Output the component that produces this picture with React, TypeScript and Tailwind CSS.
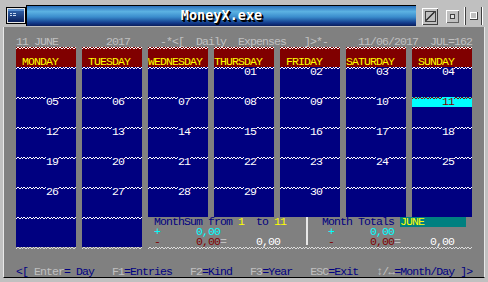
import React from "react";

const mono =
  "font-['Liberation_Mono','DejaVu_Sans_Mono',monospace] text-[11.5px] leading-[10px] tracking-[-0.9px] whitespace-pre";

function Waves({ n, color }: { n: number; color: string }) {
  return (
    <svg width={n * 6} height={10} className="block shrink-0" shapeRendering="crispEdges">
      {Array.from({ length: n }).map((_, i) => (
        <g key={i} fill={color}>
          <rect x={i * 6} y={1} width={1} height={1} />
          <rect x={i * 6 + 1} y={0} width={2} height={1} />
          <rect x={i * 6 + 3} y={1} width={2} height={1} />
          <rect x={i * 6 + 5} y={0} width={1} height={1} />
        </g>
      ))}
    </svg>
  );
}

type ColProps = { name: string; lead: number; dates: string[]; hl?: number; tall?: boolean };

function DayCol({ name, lead, dates, hl, tall }: ColProps) {
  const rows = tall ? 18 : 15;
  return (
    <div className="flex w-[60px] shrink-0 flex-col">
      <div className="h-[10px] bg-[#800000]">
        <Waves n={10} color="#ffffff" />
      </div>
      <div className={`${mono} h-[10px] bg-[#800000] text-[#ffff00]`}>{" ".repeat(lead) + name}</div>
      <div className="flex flex-col bg-[#000080]">
        {Array.from({ length: rows }).map((_, i) => {
          if (i % 3 !== 0) return <div key={i} className="h-[10px]" />;
          const d = dates[i / 3];
          const isHl = hl === i / 3;
          const c = isHl ? "#800000" : "#ffffff";
          return (
            <div key={i} className={`flex h-[10px] ${isHl ? "bg-[#00ffff]" : ""}`}>
              {d ? (
                <>
                  <Waves n={5} color={c} />
                  <span className={`${mono} w-[12px] shrink-0 ${isHl ? "text-[#800000]" : "text-white"}`}>{d}</span>
                  <Waves n={3} color={c} />
                </>
              ) : (
                <Waves n={10} color={c} />
              )}
            </div>
          );
        })}
      </div>
    </div>
  );
}

function Line({ children }: { children: React.ReactNode }) {
  return <div className={`${mono} flex h-[10px]`}>{children}</div>;
}

export default function App() {
  const navy = "text-[#000080]";
  const lg = "text-[#c0c0c0]";
  return (
    <div className="h-[282px] w-[488px] overflow-hidden bg-[#c0c0c0]">
      {/* title zone */}
      <div className="flex h-[27px]">
        <div className="w-[26px] shrink-0 pl-[6px] pt-[7px]">
          <svg width="20" height="17" shapeRendering="crispEdges">
            <defs>
              <linearGradient id="ic" x1="0" y1="0" x2="0" y2="1">
                <stop offset="0" stopColor="#3468b0" />
                <stop offset="1" stopColor="#0a1f5c" />
              </linearGradient>
            </defs>
            <rect x="0" y="0" width="20" height="17" fill="#000000" />
            <rect x="1" y="1" width="18" height="15" fill="#e8e8e8" />
            <rect x="2" y="2" width="16" height="13" fill="url(#ic)" />
            <rect x="2" y="2" width="16" height="2" fill="#5a90d0" />
            <rect x="4" y="6" width="2" height="1" fill="#c8d8f0" />
            <rect x="7" y="6" width="3" height="1" fill="#c8d8f0" />
            <rect x="4" y="8" width="2" height="1" fill="#c8d8f0" />
            <rect x="7" y="8" width="3" height="1" fill="#c8d8f0" />
          </svg>
        </div>
        <div className="mt-[5px] flex h-[21px] w-[390px] shrink-0 items-center justify-center border-l border-t border-black bg-[linear-gradient(to_bottom,#2a70bc_0%,#5cb2e2_28%,#3a8ccc_55%,#123a8a_85%,#0a1e5c_100%)]">
          <span className="font-['DejaVu_Sans_Mono',monospace] text-[13.5px] font-bold leading-none text-white [text-shadow:1px_1px_0_#000,2px_2px_0_#000]">
            MoneyX.exe
          </span>
        </div>
        <div className="flex shrink-0 items-start">
          <div className="ml-[6px] mt-[8px]">
            <svg width="16" height="17" shapeRendering="crispEdges">
              <rect x="0" y="0" width="16" height="17" fill="#ffffff" />
              <rect x="1" y="1" width="15" height="16" fill="#404040" />
              <rect x="1" y="1" width="14" height="15" fill="#c0c0c0" />
              <rect x="3" y="3" width="10" height="10" fill="none" stroke="#404040" strokeWidth="1" />
              <line x1="4" y1="12.5" x2="12.5" y2="4" stroke="#202020" strokeWidth="1.3" shapeRendering="auto" />
            </svg>
          </div>
          <div className="ml-[8px] mt-[10px]">
            <svg width="13" height="13" shapeRendering="crispEdges">
              <rect x="0" y="0" width="13" height="13" fill="#ffffff" />
              <rect x="1" y="1" width="12" height="12" fill="#606060" />
              <rect x="1" y="1" width="11" height="11" fill="#c0c0c0" />
              <rect x="4" y="4" width="5" height="5" fill="#404040" />
              <rect x="5" y="5" width="3" height="3" fill="#e0e0e0" />
            </svg>
          </div>
          <div className="ml-[5px] mt-[7px]">
            <svg width="20" height="18" shapeRendering="crispEdges">
              <rect x="0" y="0" width="1" height="18" fill="#ffffff" />
              <rect x="1" y="0" width="1" height="18" fill="#404040" />
              <rect x="6" y="5" width="8" height="8" fill="#404040" />
              <rect x="6" y="5" width="7" height="7" fill="#ffffff" />
              <rect x="7" y="6" width="5" height="5" fill="#c0c0c0" />
              <rect x="17" y="0" width="1" height="18" fill="#404040" />
              <rect x="18" y="0" width="1" height="18" fill="#ffffff" />
            </svg>
          </div>
        </div>
      </div>

      {/* body */}
      <div className="ml-[3px] w-[482px] border-x border-b border-l-[#e8e8e8] border-r-[#e8e8e8] border-b-black">
        <div className="flex h-[250px] w-[480px] flex-col bg-[#808080]">
          <div className="h-[10px]" />
          <Line>
            <span className={lg}>{"  11 JUNE        2017     -*<[  Daily  Expenses   ]>*-     11/06/2017  JUL=162"}</span>
          </Line>
          <div className="flex gap-[6px] pl-[12px]">
            <DayCol name="MONDAY" lead={1} dates={["", "05", "12", "19", "26", ""]} tall />
            <DayCol name="TUESDAY" lead={1} dates={["", "06", "13", "20", "27", ""]} tall />
            <div className="flex w-[324px] shrink-0 flex-col">
              <div className="flex gap-[6px]">
                <DayCol name="WEDNESDAY" lead={0} dates={["", "07", "14", "21", "28"]} />
                <DayCol name="THURSDAY" lead={0} dates={["01", "08", "15", "22", "29"]} />
                <DayCol name="FRIDAY" lead={1} dates={["02", "09", "16", "23", "30"]} />
                <DayCol name="SATURDAY" lead={0} dates={["03", "10", "17", "24", ""]} />
                <DayCol name="SUNDAY" lead={1} dates={["04", "11", "18", "25", ""]} hl={1} />
              </div>
              <div className="flex h-[30px]">
                <div className="flex w-[156px] shrink-0 flex-col">
                  <Line>
                    <span className={navy}>{" MonthSum from "}</span>
                    <span className="text-[#ffff00]">1</span>
                    <span className={navy}>{"  to "}</span>
                    <span className="text-[#ffff00]">11</span>
                  </Line>
                  <Line>
                    <span className="text-[#00ffff]">{" +      0,00"}</span>
                  </Line>
                  <Line>
                    <span className="text-[#800000]">{" -      0,00"}</span>
                    <span className={lg}>=</span>
                    <span className="text-white">{"     0,00"}</span>
                  </Line>
                </div>
                <div className="flex w-[6px] shrink-0 justify-center pb-[2px]">
                  <div className="w-[2px] bg-[#e8e8e8]" />
                </div>
                <div className="flex w-[162px] shrink-0 flex-col">
                  <Line>
                    <span className={navy}>{"  Month Totals "}</span>
                    <span className="w-[66px] bg-[#008080] text-[#ffff00]">{"JUNE       "}</span>
                  </Line>
                  <Line>
                    <span className="text-[#00ffff]">{"   +      0,00"}</span>
                  </Line>
                  <Line>
                    <span className="text-[#800000]">{"   -      0,00"}</span>
                    <span className={lg}>=</span>
                    <span className="text-white">{"     0,00"}</span>
                  </Line>
                </div>
              </div>
            </div>
          </div>
          <div className="flex h-[10px] gap-[6px] pl-[12px]">
            <Waves n={10} color="#dcdcdc" />
            <Waves n={10} color="#dcdcdc" />
            <Waves n={54} color="#dcdcdc" />
          </div>
          <div className="h-[10px]" />
          <Line>
            <span className={navy}>{"  <[ "}</span>
            <span className={lg}>Enter</span>
            <span className={navy}>{"= Day   "}</span>
            <span className={lg}>F1</span>
            <span className={navy}>{"=Entries   "}</span>
            <span className={lg}>F2</span>
            <span className={navy}>{"=Kind   "}</span>
            <span className={lg}>F3</span>
            <span className={navy}>{"=Year   "}</span>
            <span className={lg}>ESC</span>
            <span className={navy}>{"=Exit   "}</span>
            <span className={lg}>↕/↔</span>
            <span className={navy}>{"=Month/Day ]>"}</span>
          </Line>
        </div>
      </div>
    </div>
  );
}
